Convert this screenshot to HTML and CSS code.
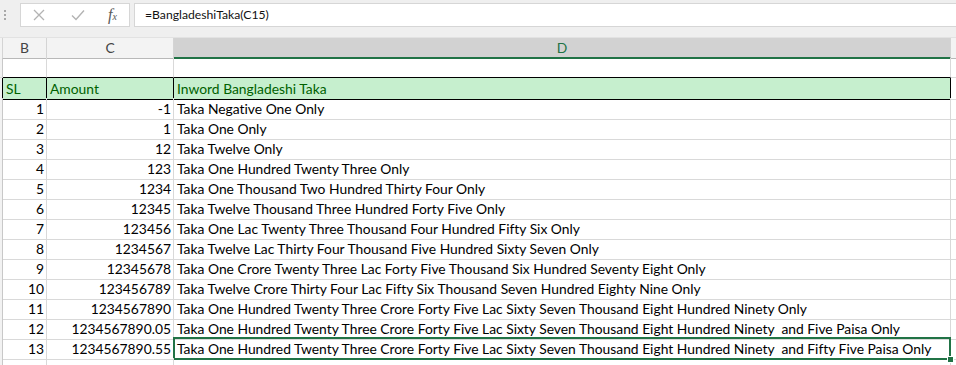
FILE: index.html
```html
<!DOCTYPE html>
<html lang="en">
<head>
    <meta charset="UTF-8">
    <title>BangladeshiTaka</title>
    <link rel="stylesheet" href="styles.css">
</head>
<body>
    <div class="formula-bar">
        <div class="grip">
            <span></span><span></span><span></span>
        </div>
        <div class="fx-buttons">
            <svg class="btn-icon" width="14" height="14" viewBox="0 0 14 14">
                <path d="M2 2 L12 12 M12 2 L2 12" stroke="#b3b3b3" stroke-width="1.3" fill="none"/>
            </svg>
            <svg class="btn-icon" width="16" height="14" viewBox="0 0 16 14">
                <path d="M2 7.5 L6 11.5 L14 2.5" stroke="#b3b3b3" stroke-width="1.4" fill="none"/>
            </svg>
            <span class="fx">f<sub>x</sub></span>
        </div>
        <div class="formula-input">=BangladeshiTaka(C15)</div>
    </div>

    <div class="sheet">
        <div class="row col-head">
            <div class="cell stub"></div>
            <div class="cell">B</div>
            <div class="cell">C</div>
            <div class="cell active">D</div>
            <div class="cell"></div>
        </div>

        <div class="row">
            <div class="cell stub"></div>
            <div class="cell above-hdr"></div>
            <div class="cell above-hdr"></div>
            <div class="cell above-hdr"></div>
            <div class="cell"></div>
        </div>

        <div class="row hdr">
            <div class="cell stub"></div>
            <div class="cell">SL</div>
            <div class="cell">Amount</div>
            <div class="cell">Inword Bangladeshi Taka</div>
            <div class="cell"></div>
        </div>

        <div id="rows"></div>

        <div class="row">
            <div class="cell stub"></div>
            <div class="cell"></div>
            <div class="cell"></div>
            <div class="cell"></div>
            <div class="cell"></div>
        </div>
    </div>

    <script>
        const data = [
            ['-1', 'Taka Negative One Only'],
            ['1', 'Taka One Only'],
            ['12', 'Taka Twelve Only'],
            ['123', 'Taka One Hundred Twenty Three Only'],
            ['1234', 'Taka One Thousand Two Hundred Thirty Four Only'],
            ['12345', 'Taka Twelve Thousand Three Hundred Forty Five Only'],
            ['123456', 'Taka One Lac Twenty Three Thousand Four Hundred Fifty Six Only'],
            ['1234567', 'Taka Twelve Lac Thirty Four Thousand Five Hundred Sixty Seven Only'],
            ['12345678', 'Taka One Crore Twenty Three Lac Forty Five Thousand Six Hundred Seventy Eight Only'],
            ['123456789', 'Taka Twelve Crore Thirty Four Lac Fifty Six Thousand Seven Hundred Eighty Nine Only'],
            ['1234567890', 'Taka One Hundred Twenty Three Crore Forty Five Lac Sixty Seven Thousand Eight Hundred Ninety Only'],
            ['1234567890.05', 'Taka One Hundred Twenty Three Crore Forty Five Lac Sixty Seven Thousand Eight Hundred Ninety \u00a0and Five Paisa Only'],
            ['1234567890.55', 'Taka One Hundred Twenty Three Crore Forty Five Lac Sixty Seven Thousand Eight Hundred Ninety \u00a0and Fifty Five Paisa Only']
        ];

        const rows = document.getElementById('rows');
        data.forEach(function(item, i) {
            const row = document.createElement('div');
            row.className = 'row';
            const selected = i === data.length - 1 ? ' selected' : '';
            row.innerHTML =
                '<div class="cell stub"></div>' +
                '<div class="cell num">' + (i + 1) + '</div>' +
                '<div class="cell num">' + item[0] + '</div>' +
                '<div class="cell' + selected + '">' + item[1] + '</div>' +
                '<div class="cell"></div>';
            rows.appendChild(row);
        });
    </script>
</body>
</html>
```

FILE: styles.css
```css
body {
    margin: 0;
    width: 956px;
    height: 365px;
    overflow: hidden;
    background-color: #ffffff;
    font-family: Lato, 'Liberation Sans', sans-serif;
    font-size: 13.85px;
    font-variant-ligatures: none;
    color: #000;
}
.formula-bar {
    height: 38px;
    background-color: #efefef;
    display: flex;
    align-items: flex-start;
    padding-top: 3px;
    box-sizing: border-box;
    border-bottom: 1px solid #e2e2e2;
}
.grip {
    width: 20px;
    height: 24px;
    display: flex;
    flex-direction: column;
    justify-content: center;
    align-items: center;
    gap: 2px;
    padding-right: 10px;
    box-sizing: border-box;
}
.grip span {
    width: 2px;
    height: 2px;
    background-color: #a8a8a8;
}
.fx-buttons {
    width: 110px;
    height: 24px;
    background-color: #fff;
    border: 1px solid #d6d6d6;
    box-sizing: border-box;
    display: flex;
    align-items: center;
    padding-left: 11px;
    gap: 24px;
}
.fx {
    font-family: 'Liberation Serif', serif;
    font-style: italic;
    font-size: 16px;
    color: #5a5a5a;
    margin-left: -2px;
}
.fx sub {
    font-size: 10px;
    vertical-align: 0;
}
.formula-input {
    flex: 1;
    height: 24px;
    margin-left: 4px;
    background-color: #fff;
    border: 1px solid #d6d6d6;
    border-right: none;
    box-sizing: border-box;
    font-size: 12.2px;
    line-height: 22px;
    padding-left: 10px;
    color: #111;
}
.sheet {
    background-color: #fff;
}
.row {
    display: grid;
    grid-template-columns: 3px 44px 127px 777px 5px;
    height: 20px;
}
.cell {
    position: relative;
    border-right: 1px solid #d9d9d9;
    border-bottom: 1px solid #d9d9d9;
    box-sizing: border-box;
    padding: 1px 3px 0;
    line-height: 20px;
    white-space: nowrap;
    overflow: visible;
}
.cell.stub {
    padding: 0;
    background-color: #f2f2f2;
    border-right-color: #c8c8c8;
}
.cell.num {
    text-align: right;
    padding-right: 2px;
}
.col-head .cell {
    background-color: #f3f3f3;
    border-right-color: #d4d4d4;
    border-bottom-color: #b8b8b8;
    text-align: center;
    color: #444;
    line-height: 19px;
    padding-top: 0;
}
.col-head .cell.active {
    background-color: #d2d2d2;
    border-bottom: 2px solid #217346;
    color: #217346;
}
.cell.above-hdr {
    border-bottom-color: #000;
}
.hdr .cell {
    color: #006100;
}
.hdr .cell:nth-child(2),
.hdr .cell:nth-child(3),
.hdr .cell:nth-child(4) {
    background-color: #c6efce;
    border-right-color: #000;
    border-bottom-color: #000;
}
.hdr .cell.stub {
    border-right-color: #000;
}
.cell.selected::after {
    content: '';
    position: absolute;
    left: -1px;
    top: -1px;
    right: -1px;
    bottom: -1px;
    border: 2px solid #217346;
}
.cell.selected::before {
    content: '';
    position: absolute;
    right: -4px;
    bottom: -4px;
    width: 5px;
    height: 5px;
    background-color: #217346;
    border: 1px solid #fff;
    z-index: 1;
}
```
